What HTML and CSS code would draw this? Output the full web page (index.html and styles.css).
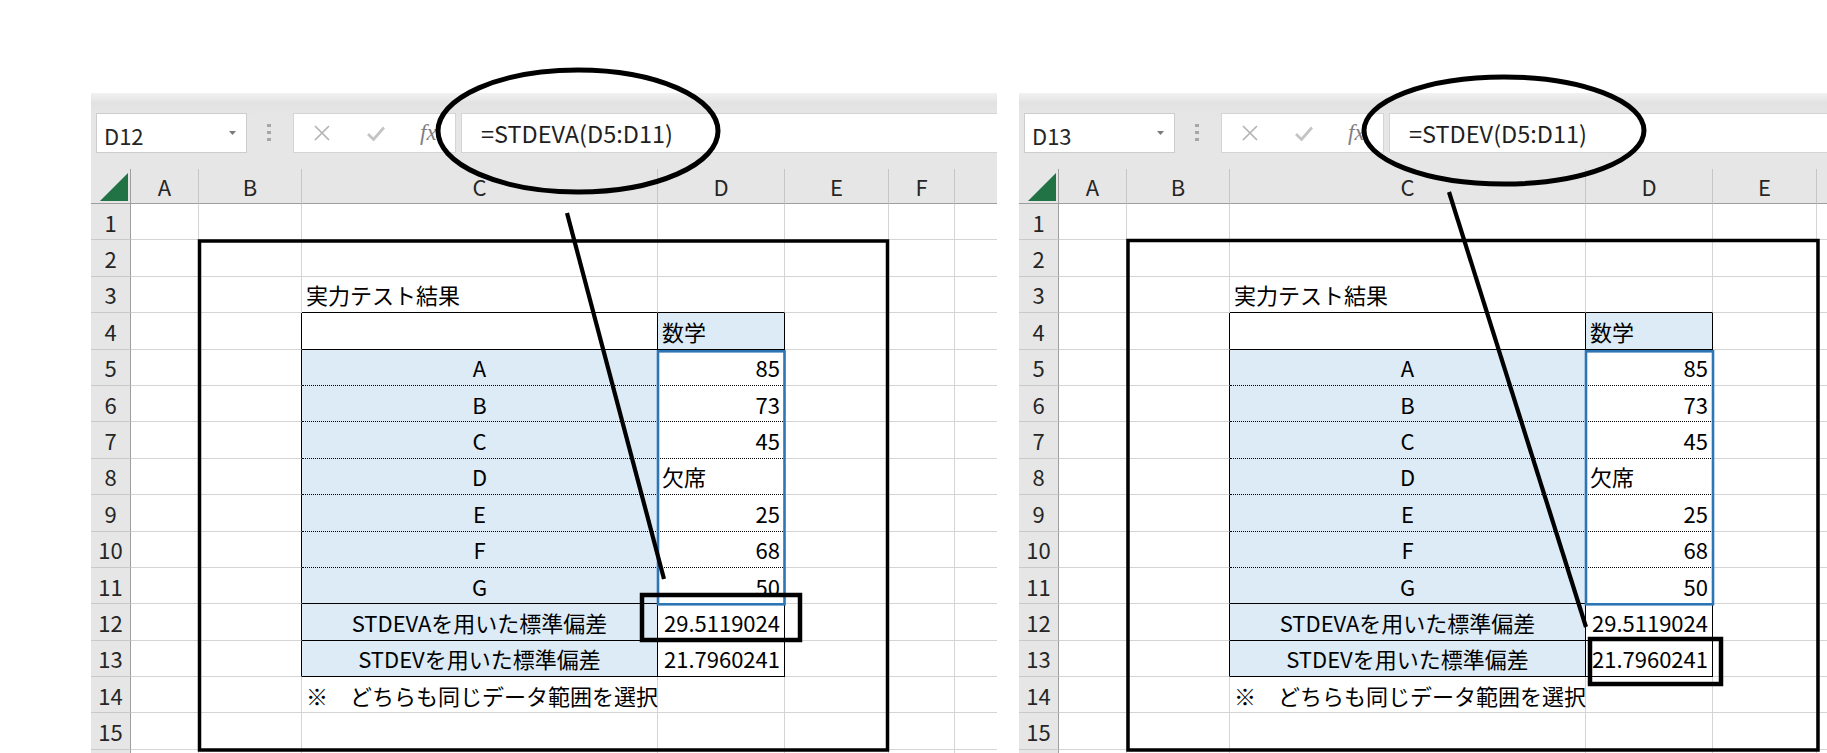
FILE: index.html
```html
<!DOCTYPE html>
<html lang="ja">
<head>
  <meta charset="utf-8">
  <link rel="stylesheet" href="styles.css">
</head>
<body>
  <div class="screens">

    <div class="sheet-window left-window">
      <div class="formula-bar">
        <div class="name-box">
          <span>D12</span>
          <svg class="drop" viewBox="0 0 7 4"><polygon points="0,0 7,0 3.5,4"/></svg>
        </div>
        <svg class="grip" viewBox="0 0 4 18"><rect x="0" y="0" width="4" height="3"/><rect x="0" y="7" width="4" height="3"/><rect x="0" y="14" width="4" height="3"/></svg>
        <div class="bar-buttons">
          <svg class="btn-cancel" viewBox="0 0 16 16"><path d="M1 1L15 15M15 1L1 15"/></svg>
          <svg class="btn-enter" viewBox="0 0 18 15"><path d="M1 8l5.5 5.5L17 1.5"/></svg>
          <span class="fx">fx</span>
        </div>
        <div class="formula-input">=STDEVA(D5:D11)</div>
      </div>
      <table class="grid">
        <colgroup>
          <col class="col-rh"><col class="col-a"><col class="col-b"><col class="col-c"><col class="col-d"><col class="col-e"><col class="col-f"><col class="col-g">
        </colgroup>
        <thead>
          <tr>
            <th class="corner"><svg viewBox="0 0 28 28"><polygon points="28,0 28,28 0,28"/></svg></th>
            <th>A</th><th>B</th><th>C</th><th>D</th><th>E</th><th>F</th><th></th>
          </tr>
        </thead>
        <tbody>
          <tr><th>1</th><td></td><td></td><td></td><td></td><td></td><td></td><td></td></tr>
          <tr><th>2</th><td></td><td></td><td></td><td></td><td></td><td></td><td></td></tr>
          <tr><th>3</th><td></td><td></td><td class="edge-b">実力テスト結果</td><td class="edge-b"></td><td></td><td></td><td></td></tr>
          <tr><th>4</th><td></td><td class="edge-r"></td><td class="edge-r edge-b"></td><td class="fill edge-r edge-b">数学</td><td></td><td></td><td></td></tr>
          <tr><th>5</th><td></td><td class="edge-r"></td><td class="fill mid edge-r dot-b">A</td><td class="num edge-r dot-b">85</td><td></td><td></td><td></td></tr>
          <tr><th>6</th><td></td><td class="edge-r"></td><td class="fill mid edge-r dot-b">B</td><td class="num edge-r dot-b">73</td><td></td><td></td><td></td></tr>
          <tr><th>7</th><td></td><td class="edge-r"></td><td class="fill mid edge-r dot-b">C</td><td class="num edge-r dot-b">45</td><td></td><td></td><td></td></tr>
          <tr><th>8</th><td></td><td class="edge-r"></td><td class="fill mid edge-r dot-b">D</td><td class="edge-r dot-b">欠席</td><td></td><td></td><td></td></tr>
          <tr><th>9</th><td></td><td class="edge-r"></td><td class="fill mid edge-r dot-b">E</td><td class="num edge-r dot-b">25</td><td></td><td></td><td></td></tr>
          <tr><th>10</th><td></td><td class="edge-r"></td><td class="fill mid edge-r dot-b">F</td><td class="num edge-r dot-b">68</td><td></td><td></td><td></td></tr>
          <tr><th>11</th><td></td><td class="edge-r"></td><td class="fill mid edge-r edge-b">G</td><td class="num edge-r edge-b">50</td><td></td><td></td><td></td></tr>
          <tr><th>12</th><td></td><td class="edge-r"></td><td class="fill mid edge-r edge-b">STDEVAを用いた標準偏差</td><td class="num edge-r edge-b">29.5119024</td><td></td><td></td><td></td></tr>
          <tr><th>13</th><td></td><td class="edge-r"></td><td class="fill mid edge-r edge-b">STDEVを用いた標準偏差</td><td class="num edge-r edge-b">21.7960241</td><td></td><td></td><td></td></tr>
          <tr><th>14</th><td></td><td></td><td>※　どちらも同じデータ範囲を選択</td><td></td><td></td><td></td><td></td></tr>
          <tr><th>15</th><td></td><td></td><td></td><td></td><td></td><td></td><td></td></tr>
          <tr><th></th><td></td><td></td><td></td><td></td><td></td><td></td><td></td></tr>
        </tbody>
      </table>
    </div>

    <div class="sheet-window right-window">
      <div class="formula-bar">
        <div class="name-box">
          <span>D13</span>
          <svg class="drop" viewBox="0 0 7 4"><polygon points="0,0 7,0 3.5,4"/></svg>
        </div>
        <svg class="grip" viewBox="0 0 4 18"><rect x="0" y="0" width="4" height="3"/><rect x="0" y="7" width="4" height="3"/><rect x="0" y="14" width="4" height="3"/></svg>
        <div class="bar-buttons">
          <svg class="btn-cancel" viewBox="0 0 16 16"><path d="M1 1L15 15M15 1L1 15"/></svg>
          <svg class="btn-enter" viewBox="0 0 18 15"><path d="M1 8l5.5 5.5L17 1.5"/></svg>
          <span class="fx">fx</span>
        </div>
        <div class="formula-input">=STDEV(D5:D11)</div>
      </div>
      <table class="grid">
        <colgroup>
          <col class="col-rh"><col class="col-a"><col class="col-b"><col class="col-c"><col class="col-d"><col class="col-e"><col class="col-f"><col class="col-g">
        </colgroup>
        <thead>
          <tr>
            <th class="corner"><svg viewBox="0 0 28 28"><polygon points="28,0 28,28 0,28"/></svg></th>
            <th>A</th><th>B</th><th>C</th><th>D</th><th>E</th><th></th><th></th>
          </tr>
        </thead>
        <tbody>
          <tr><th>1</th><td></td><td></td><td></td><td></td><td></td><td></td><td></td></tr>
          <tr><th>2</th><td></td><td></td><td></td><td></td><td></td><td></td><td></td></tr>
          <tr><th>3</th><td></td><td></td><td class="edge-b">実力テスト結果</td><td class="edge-b"></td><td></td><td></td><td></td></tr>
          <tr><th>4</th><td></td><td class="edge-r"></td><td class="edge-r edge-b"></td><td class="fill edge-r edge-b">数学</td><td></td><td></td><td></td></tr>
          <tr><th>5</th><td></td><td class="edge-r"></td><td class="fill mid edge-r dot-b">A</td><td class="num edge-r dot-b">85</td><td></td><td></td><td></td></tr>
          <tr><th>6</th><td></td><td class="edge-r"></td><td class="fill mid edge-r dot-b">B</td><td class="num edge-r dot-b">73</td><td></td><td></td><td></td></tr>
          <tr><th>7</th><td></td><td class="edge-r"></td><td class="fill mid edge-r dot-b">C</td><td class="num edge-r dot-b">45</td><td></td><td></td><td></td></tr>
          <tr><th>8</th><td></td><td class="edge-r"></td><td class="fill mid edge-r dot-b">D</td><td class="edge-r dot-b">欠席</td><td></td><td></td><td></td></tr>
          <tr><th>9</th><td></td><td class="edge-r"></td><td class="fill mid edge-r dot-b">E</td><td class="num edge-r dot-b">25</td><td></td><td></td><td></td></tr>
          <tr><th>10</th><td></td><td class="edge-r"></td><td class="fill mid edge-r dot-b">F</td><td class="num edge-r dot-b">68</td><td></td><td></td><td></td></tr>
          <tr><th>11</th><td></td><td class="edge-r"></td><td class="fill mid edge-r edge-b">G</td><td class="num edge-r edge-b">50</td><td></td><td></td><td></td></tr>
          <tr><th>12</th><td></td><td class="edge-r"></td><td class="fill mid edge-r edge-b">STDEVAを用いた標準偏差</td><td class="num edge-r edge-b">29.5119024</td><td></td><td></td><td></td></tr>
          <tr><th>13</th><td></td><td class="edge-r"></td><td class="fill mid edge-r edge-b">STDEVを用いた標準偏差</td><td class="num edge-r edge-b">21.7960241</td><td></td><td></td><td></td></tr>
          <tr><th>14</th><td></td><td></td><td>※　どちらも同じデータ範囲を選択</td><td></td><td></td><td></td><td></td></tr>
          <tr><th>15</th><td></td><td></td><td></td><td></td><td></td><td></td><td></td></tr>
          <tr><th></th><td></td><td></td><td></td><td></td><td></td><td></td><td></td></tr>
        </tbody>
      </table>
    </div>

  </div>

  <!-- hand-drawn annotations over both screenshots -->
  <svg class="marks" viewBox="0 0 1827 753">
    <rect class="range" x="658" y="351.3" width="126.5" height="253"/>
    <rect class="range" x="1586" y="351.3" width="127" height="253"/>

    <ellipse class="ring" cx="578" cy="131" rx="140" ry="61"/>
    <line x1="567" y1="213" x2="664" y2="579"/>
    <rect class="frame" x="199.5" y="241" width="688" height="509"/>
    <rect class="pick" x="642" y="595" width="158" height="45"/>

    <ellipse class="ring" cx="1504" cy="130.5" rx="140" ry="53.5"/>
    <line x1="1449" y1="192" x2="1586" y2="627"/>
    <rect class="frame" x="1128" y="240.5" width="690" height="509.5"/>
    <rect class="pick" x="1590" y="639" width="131" height="45"/>
  </svg>
</body>
</html>
```

FILE: styles.css
```css
body {
  margin: 0;
  width: 1827px;
  height: 753px;
  overflow: hidden;
  position: relative;
  background: #fff;
  font-family: "Noto Sans CJK JP", "Noto Sans", sans-serif;
  color: #000;
}
.screens {
  display: flex;
  gap: 22px;
  height: 753px;
  padding: 93px 0 0 91px;
  box-sizing: border-box;
}
.sheet-window {
  flex: none;
  height: 660px;
  overflow: hidden;
  background: #e6e6e6;
}
.left-window {
  width: 906px;
}
.right-window {
  flex: 1;
}

/* formula bar */
.formula-bar {
  height: 76px;
  box-sizing: border-box;
  padding: 20px 0 0 5px;
  display: flex;
  align-items: flex-start;
  background: linear-gradient(#f2f2f2, #e2e2e2 10px, #e6e6e6 22px);
}
.name-box {
  width: 151px;
  height: 40px;
  box-sizing: border-box;
  flex: none;
  display: flex;
  align-items: center;
  justify-content: space-between;
  padding: 4px 10px 0 7px;
  background: #fff;
  border: 1px solid #cdcdcd;
  font-size: 22px;
  color: #262626;
}
.name-box .drop {
  width: 7px;
  height: 4px;
  margin-top: -4px;
  fill: #7a7a7a;
}
.grip {
  flex: none;
  width: 4px;
  height: 18px;
  margin: 11px 22px 0 20px;
  fill: #a6a6a6;
}
.bar-buttons {
  width: 163px;
  height: 40px;
  box-sizing: border-box;
  flex: none;
  display: flex;
  align-items: center;
  padding-left: 20px;
  background: #fff;
  border: 1px solid #d4d4d4;
}
.btn-cancel {
  width: 16px;
  height: 16px;
  fill: none;
  stroke: #b4b4b4;
  stroke-width: 1.7;
}
.btn-enter {
  width: 18px;
  height: 15px;
  margin-left: 37px;
  fill: none;
  stroke: #c4c4c4;
  stroke-width: 2.8;
}
.fx {
  margin-left: 35px;
  font-family: "Liberation Serif", serif;
  font-style: italic;
  font-size: 23px;
  color: #7f7f7f;
}
.formula-input {
  flex: 1;
  height: 40px;
  box-sizing: border-box;
  margin-left: 5px;
  padding-left: 19px;
  display: flex;
  align-items: center;
  background: #fff;
  border: 1px solid #d4d4d4;
  border-right: none;
  font-size: 23.5px;
  color: #1f1f1f;
  white-space: nowrap;
}

/* sheet grid */
.grid {
  table-layout: fixed;
  width: 964px;
  border-collapse: separate;
  border-spacing: 0;
  font-size: 22px;
}
.col-rh { width: 40px; }
.col-a { width: 68px; }
.col-b { width: 103px; }
.col-c { width: 356px; }
.col-d { width: 127px; }
.col-e { width: 104px; }
.col-f { width: 66px; }
.col-g { width: 100px; }

.grid th {
  box-sizing: border-box;
  padding: 0;
  font-weight: normal;
  color: #262626;
  background: #e6e6e6;
  text-align: center;
}
.grid thead th {
  height: 35px;
  border-right: 1px solid #c6c6c6;
  border-bottom: 1px solid #9e9e9e;
}
.grid thead .corner {
  border-right-color: #9e9e9e;
  text-align: left;
  vertical-align: top;
}
.corner svg {
  display: block;
  width: 28px;
  height: 28px;
  margin: 4px 0 0 9px;
  fill: #217346;
}
.grid tbody th {
  height: 36.4px;
  border-right: 1px solid #9e9e9e;
  border-bottom: 1px solid #c9c9c9;
}
.grid td {
  box-sizing: border-box;
  height: 36.4px;
  padding: 0 4px;
  background: #fff;
  border-right: 1px solid #d4d4d4;
  border-bottom: 1px solid #d4d4d4;
  white-space: nowrap;
  overflow: visible;
}
.grid .fill {
  background: #ddebf7;
}
.grid .mid {
  text-align: center;
}
.grid .num {
  text-align: right;
}
.grid .edge-r {
  border-right-color: #000;
}
.grid .edge-b {
  border-bottom-color: #000;
}
.grid .dot-b {
  border-bottom: 1px dotted #000;
}

/* annotations */
.marks {
  position: absolute;
  top: 0;
  left: 0;
  width: 1827px;
  height: 753px;
  pointer-events: none;
  fill: none;
  stroke: #000;
  stroke-width: 4.2;
}
.marks .ring {
  stroke-width: 5;
}
.marks .frame {
  stroke-width: 3.5;
}
.marks .pick {
  stroke-width: 4.5;
}
.marks .range {
  stroke: #2e75b6;
  stroke-width: 2.6;
}
```
